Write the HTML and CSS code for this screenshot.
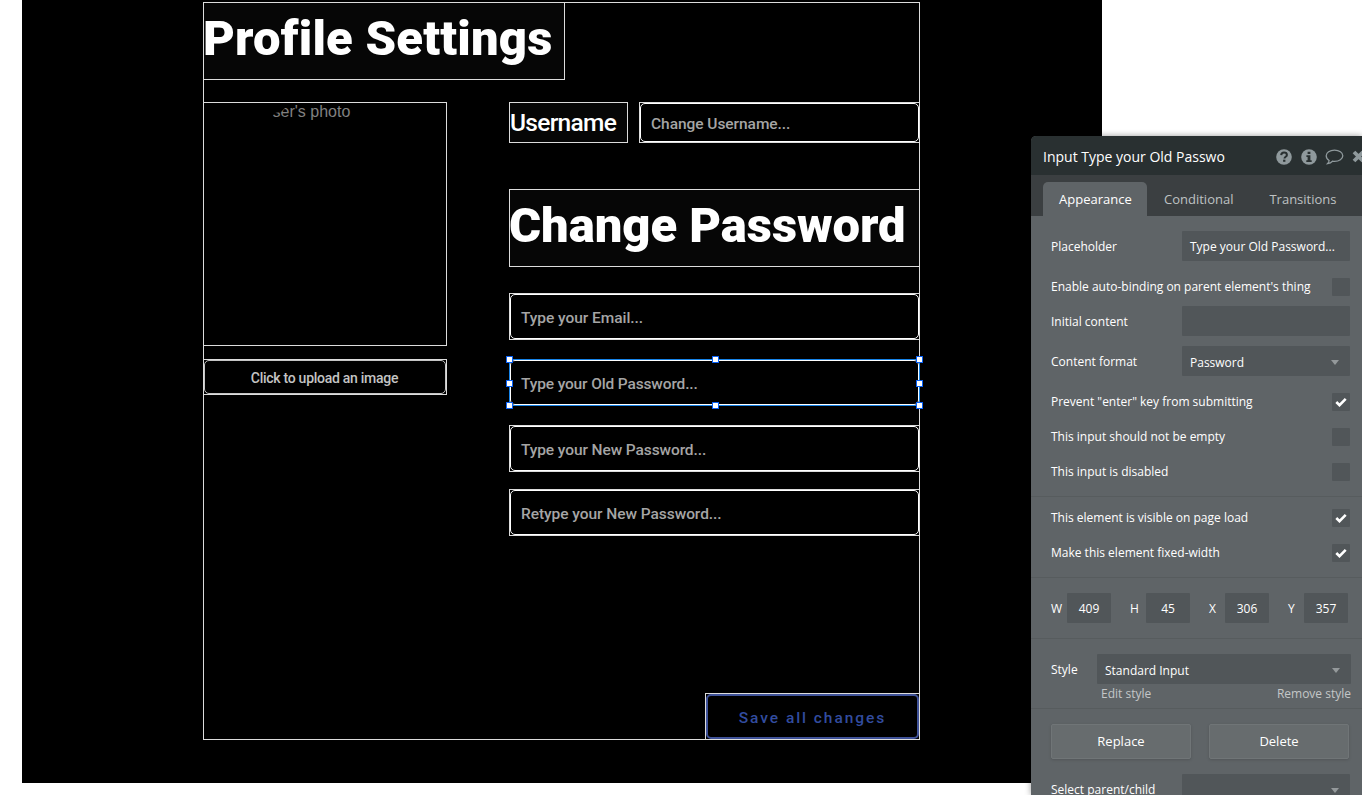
FILE: index.html
```html
<!DOCTYPE html>
<html lang="en">
<head>
<meta charset="utf-8">
<title>Profile Settings</title>
<link rel="stylesheet" href="styles.css">
</head>
<body>
<main class="page">
  <section class="group">
    <div class="group-inner">
      <h1 class="box title title-profile"><span>Profile Settings</span></h1>
      <div class="columns">
        <div class="left-col">
          <div class="box photo"><span class="photo-label">User's photo</span></div>
          <div class="box upload"><div class="upload-inner"><span>Click to upload an image</span></div></div>
        </div>
        <div class="right-col">
          <div class="user-row">
            <div class="box username"><span>Username</span></div>
            <div class="box field field-user"><div class="field-inner"><span class="t-user">Change Username...</span></div></div>
          </div>
          <h2 class="box title title-password"><span>Change Password</span></h2>
          <div class="box field email"><div class="field-inner"><span class="t-email">Type your Email...</span></div></div>
          <div class="box field selected"><div class="field-inner"><span class="t-old">Type your Old Password...</span></div>
            <i class="handle n w"></i><i class="handle n c"></i><i class="handle n e"></i>
            <i class="handle m w"></i><i class="handle m e"></i>
            <i class="handle s w"></i><i class="handle s c"></i><i class="handle s e"></i>
          </div>
          <div class="box field new"><div class="field-inner"><span class="t-new">Type your New Password...</span></div></div>
          <div class="box field retype"><div class="field-inner"><span class="t-retype">Retype your New Password...</span></div></div>
          <div class="box save"><div class="save-inner"><span>Save all changes</span></div></div>
        </div>
      </div>
    </div>
  </section>
</main>

<aside class="panel">
  <header class="panel-head">
    <span class="panel-title">Input Type your Old Passwo</span>
    <svg class="ico" width="16" height="16" viewBox="0 0 16 16"><circle cx="8" cy="8" r="7.8" fill="#8f999c"/><path d="M5.2 6.1C5.3 4.3 6.4 3.5 8 3.5s2.9.9 2.9 2.4c0 1.900-2.400 1.900-2.400 3.600" fill="none" stroke="#293031" stroke-width="2"/><rect x="7.1" y="10.7" width="2.3" height="2.1" fill="#293031"/></svg>
    <svg class="ico" width="16" height="16" viewBox="0 0 16 16"><circle cx="8" cy="8" r="7.8" fill="#8f999c"/><path d="M6.6 2.800h2.800v2.200H6.600zM5.400 6.200h4v5h1.300v1.700H5.300v-1.700h1.300V7.900H5.400z" fill="#293031"/></svg>
    <svg class="ico bubble" width="19" height="16" viewBox="0 0 19 16"><path d="M9.5 1.2c4.700 0 8.300 2.500 8.300 5.600s-3.600 5.600-8.300 5.600c-.7 0-1.400-.1-2-.2-1.200 1.200-2.800 2-4.800 2.300.8-.8 1.300-1.900 1.400-3C2.300 10.400 1.200 8.700 1.200 6.800c0-3.100 3.600-5.600 8.300-5.600z" fill="none" stroke="#8f999c" stroke-width="1.300"/></svg>
    <svg class="ico close" width="13" height="13" viewBox="0 0 13 13"><path d="M2 2l9 9M11 2l-9 9" stroke="#8f999c" stroke-width="3.800"/></svg>
  </header>
  <nav class="tabs">
    <span class="tab active">Appearance</span>
    <span class="tab">Conditional</span>
    <span class="tab last">Transitions</span>
  </nav>
  <div class="sect first">
    <div class="row tall gap17"><span>Placeholder</span><span class="inp">Type your Old Password...</span></div>
    <div class="row gap10"><span>Enable auto-binding on parent element's thing</span><span class="check"></span></div>
    <div class="row tall gap10"><span>Initial content</span><span class="inp"></span></div>
    <div class="row tall gap17"><span>Content format</span><span class="inp drop">Password<i class="caret"></i></span></div>
    <div class="row gap17"><span>Prevent "enter" key from submitting</span><span class="check"><svg width="12" height="10" viewBox="0 0 12 10"><path d="M1.300 5l3.200 3.200L10.700 1.900" fill="none" stroke="#fff" stroke-width="2.600"/></svg></span></div>
    <div class="row gap17"><span>This input should not be empty</span><span class="check"></span></div>
    <div class="row"><span>This input is disabled</span><span class="check"></span></div>
  </div>
  <div class="sect visible">
    <div class="row gap17"><span>This element is visible on page load</span><span class="check"><svg width="12" height="10" viewBox="0 0 12 10"><path d="M1.300 5l3.200 3.200L10.700 1.900" fill="none" stroke="#fff" stroke-width="2.600"/></svg></span></div>
    <div class="row"><span>Make this element fixed-width</span><span class="check"><svg width="12" height="10" viewBox="0 0 12 10"><path d="M1.300 5l3.200 3.200L10.700 1.900" fill="none" stroke="#fff" stroke-width="2.600"/></svg></span></div>
  </div>
  <div class="sect dims">
    <label>W</label><span class="num">409</span>
    <label>H</label><span class="num">45</span>
    <label>X</label><span class="num">306</span>
    <label>Y</label><span class="num">357</span>
  </div>
  <div class="sect style-sect">
    <div class="row tall"><span>Style</span><span class="inp drop wide">Standard Input<i class="caret"></i></span></div>
    <div class="links"><span>Edit style</span><span>Remove style</span></div>
  </div>
  <div class="sect actions">
    <div class="buttons"><span class="btn">Replace</span><span class="btn">Delete</span></div>
    <div class="row tall"><span>Select parent/child</span><span class="inp drop"><i class="caret"></i></span></div>
  </div>
</aside>
</body>
</html>
```
FILE: styles.css
```css
* { box-sizing: border-box; }
html, body { margin: 0; height: 100%; overflow: hidden; background: #fff; }
body { position: relative; font-family: Roboto, sans-serif; }
span { white-space: nowrap; }

.page { width: 1080px; height: 783px; margin-left: 22px; padding: 2px 0 0 181px; background: #000; }
.group { width: 717px; height: 738px; border: 1px solid #dcdcdc; }
.group-inner { margin: -1px; }
.box { border: 1px solid #dcdcdc; }

.title { margin: 0; height: 78px; background: #060606; color: #fff; display: flex; align-items: center; font-weight: 900; font-size: 49px; line-height: 60px; padding-bottom: 4px; }
.title span { margin-left: -1px; }
.title-profile { width: 362px; letter-spacing: 0.2px; }
.title-password { width: 411px; margin-top: 46px; letter-spacing: -0.05px; }

.columns { display: flex; gap: 62px; margin-top: 22px; }
.left-col { width: 244px; }
.photo { height: 244px; padding-left: 57px; }
.photo-label { display: block; font: 16px/18px "Liberation Sans", sans-serif; color: #808080; clip-path: polygon(10px 14px, 14px 10px, 20px 9px, 24px 5px, 26px 0, 110px 0, 110px 18px, 10px 18px); }
.upload { height: 36px; margin-top: 13px; }
.upload-inner { height: 100%; border: 1px solid #c4c4c4; border-radius: 5px; display: flex; align-items: center; justify-content: center; padding: 1px 1px 0 0; color: #c4c4c4; font-size: 14px; font-weight: 500; letter-spacing: -0.27px; }

.right-col { width: 411px; }
.user-row { display: flex; gap: 11px; }
.username { width: 119px; height: 41px; background: #060606; color: #fff; font-size: 24.5px; line-height: 40px; letter-spacing: -0.7px; font-weight: 500; }
.field { position: relative; height: 47px; }
.field-user { width: 281px; height: 41px; }
.field-inner { height: 100%; border: 1px solid #fff; border-radius: 5px; display: flex; align-items: center; padding: 2px 0 0 10px; color: #a5a5a5; font-size: 15.5px; font-weight: 500; }
.t-user { letter-spacing: -0.05px; }
.t-email { letter-spacing: -0.05px; }
.t-old { letter-spacing: -0.14px; }
.t-new { letter-spacing: -0.1px; }
.t-retype { letter-spacing: -0.05px; }
.email { margin-top: 26px; }
.selected { margin-top: 19px; border-color: #1683e8; }
.new { margin-top: 19px; }
.retype { margin-top: 17px; }
.handle { position: absolute; width: 7px; height: 7px; background: #fff; border: 1px solid #0b62f5; }
.n { top: -4px; }
.m { top: 20px; }
.s { bottom: -4px; }
.w { left: -4px; }
.c { left: 202px; }
.e { right: -4px; }
.save { width: 215px; height: 47px; margin: 157px 0 0 auto; }
.save-inner { height: 100%; border: 2px solid #3f5299; border-radius: 5px; display: flex; align-items: center; justify-content: center; padding-top: 2px; color: #324c9f; font-size: 15.5px; font-weight: 500; letter-spacing: 1.95px; }

.panel { position: absolute; left: 1031px; top: 136px; width: 331px; height: 659px; overflow: hidden; background: #5f6467; border-radius: 5px 0 0 0; color: #fff; font: 12px/18px "Open Sans", sans-serif; box-shadow: 0 0 6px rgba(0,0,0,.4); }
.panel-head { height: 39px; width: 345px; background: #293031; display: flex; align-items: center; padding: 2px 0 0 12px; }
.panel-title { flex: none; width: 232.5px; font-size: 14px; }
.ico { flex: none; margin-right: 9px; }
.bubble { margin: 1px 8px 0 -1px; }
.tabs { height: 41px; background: #3b3f41; display: flex; align-items: flex-end; padding-left: 12px; font-size: 13px; }
.tab { height: 34px; line-height: 34px; padding-left: 17px; color: #bfc2c3; }
.tab.last { padding-left: 36px; }
.tab.active { width: 104px; padding-left: 16px; background: #5f6467; color: #fff; border-radius: 5px 5px 0 0; }

.sect { padding: 15px 12px 15px 20px; border-bottom: 1px solid #575c5e; }
.visible { padding-top: 12px; }
.row { height: 18px; display: flex; align-items: center; justify-content: space-between; }
.tall { height: 30px; }
.tall > span:first-child { padding-top: 2px; }
.gap17 { margin-bottom: 17px; }
.gap10 { margin-bottom: 10px; }
.inp { position: relative; width: 168px; height: 30px; padding-left: 8px; line-height: 31px; background: #515659; border-radius: 1px; }
.drop { display: flex; align-items: center; justify-content: space-between; padding-top: 2px; padding-right: 11px; }
.caret { margin-left: auto; border: 4px solid transparent; border-top: 5px solid #94999b; border-bottom: 0; }
.check { width: 18px; height: 18px; background: #515659; border-radius: 1px; display: flex; align-items: center; justify-content: center; }
.dims { display: grid; grid-template-columns: 16px 44px 35px 44px 35px 44px 35px 44px; padding-right: 0; align-items: center; }
.dims label { padding-top: 2px; }
.dims label:nth-of-type(n+2) { padding-left: 19px; }
.num { height: 30px; line-height: 31px; text-align: center; background: #515659; border-radius: 1px; }
.style-sect { padding: 15px 11px 0 20px; }
.wide { width: 254px; }
.links { height: 24px; padding-left: 50px; display: flex; justify-content: space-between; line-height: 20px; color: #c4c7c8; }
.actions { border: 0; }
.buttons { display: flex; gap: 18px; margin-bottom: 15px; }
.btn { width: 140px; height: 35px; line-height: 33px; text-align: center; font-size: 13px; background: #676c6e; border: 1px solid #707577; border-radius: 2px; box-shadow: 0 1px 3px rgba(0,0,0,.15); }
```
